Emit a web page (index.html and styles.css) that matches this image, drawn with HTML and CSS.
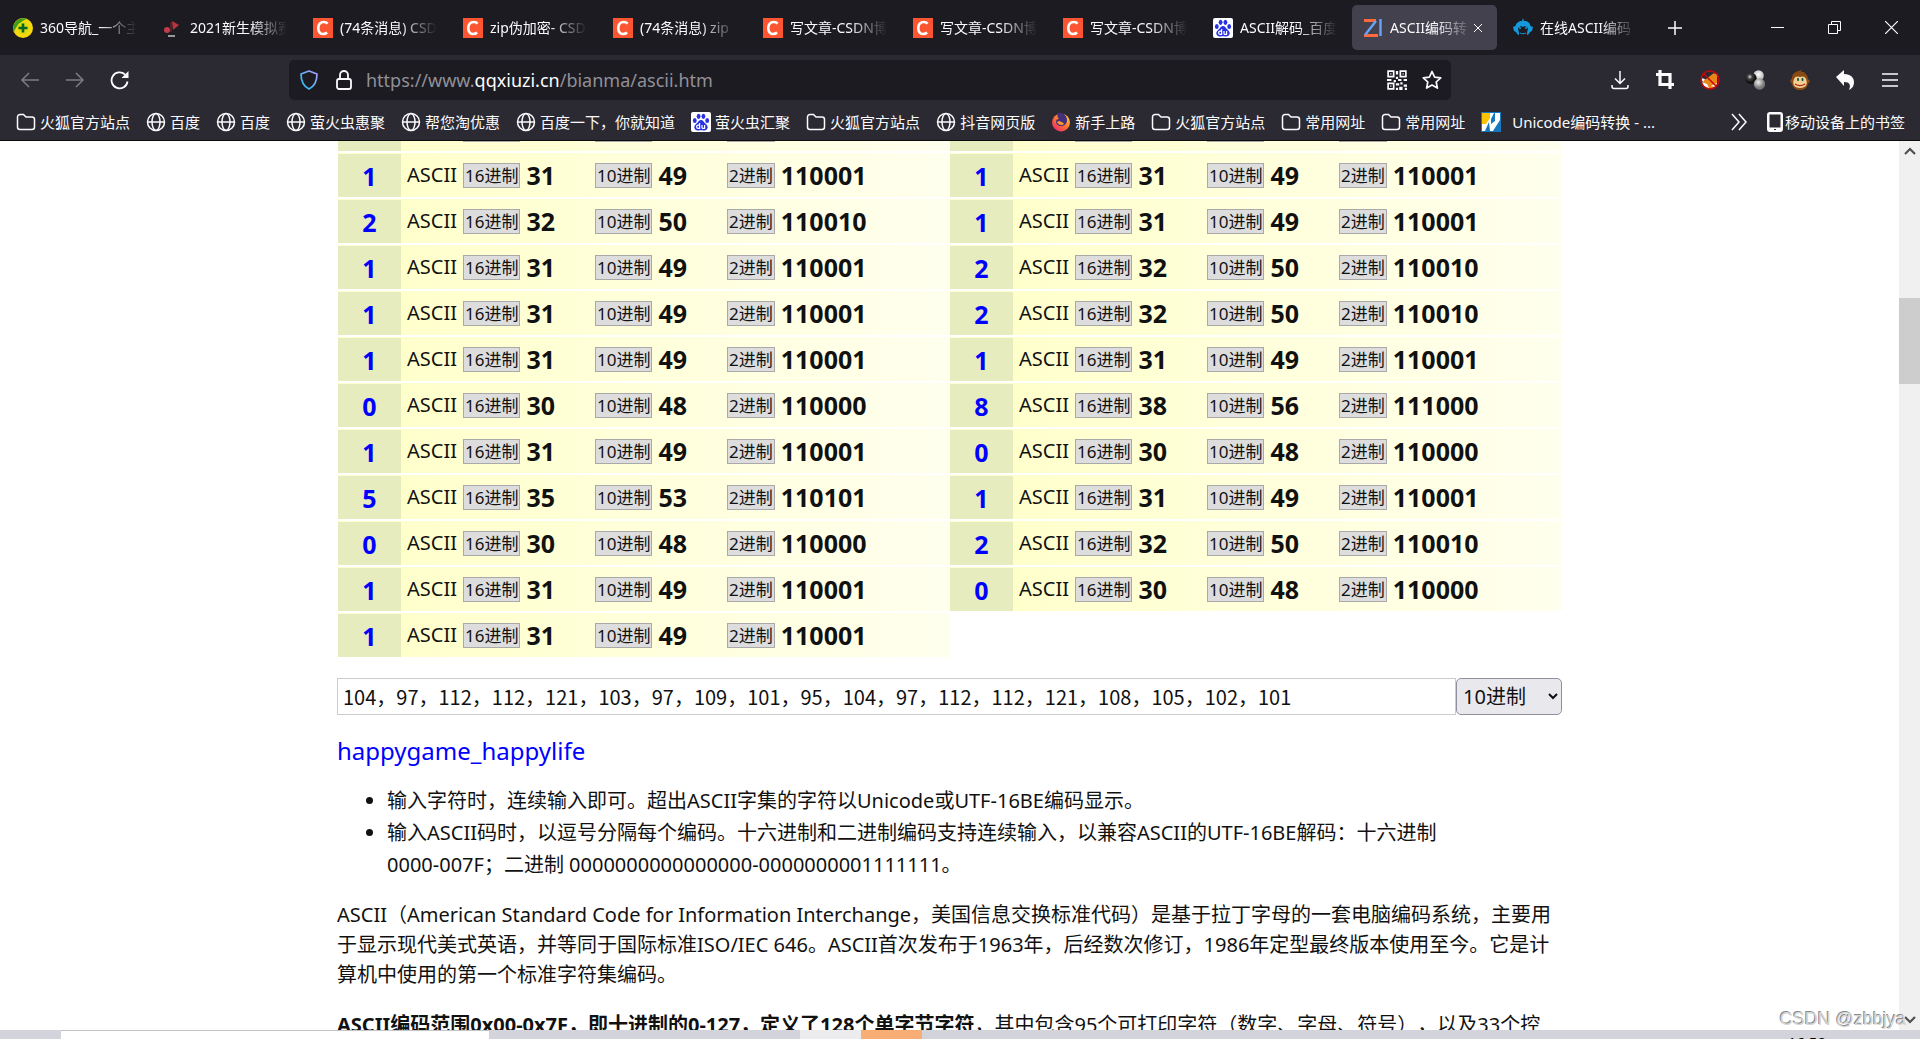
FILE: index.html
```html
<!DOCTYPE html>
<html lang="zh-CN">
<head>
<meta charset="utf-8">
<title>ASCII编码转换</title>
<link rel="stylesheet" href="styles.css">
</head>
<body>
<svg class="defs" aria-hidden="true">
  <symbol id="i-csdn" viewBox="0 0 20 20"><path fill="#fc5531" d="M0 0h20v20H0z"/><path d="M14.6 5.6C13.6 4.5 12.2 4 10.700 4 7.400 4 5.400 6.500 5.300 9.900c-.1 3.500 1.500 6.100 4.700 6.100 1.700 0 3-.5 4.100-1.500" fill="none" stroke="#fff" stroke-width="2.600"/></symbol>
  <symbol id="i-baidu" viewBox="0 0 20 20"><rect width="20" height="20" rx="2" fill="#fff"/><g fill="#2932e1"><ellipse cx="3.800" cy="8.600" rx="1.900" ry="2.500"/><ellipse cx="7.600" cy="4.300" rx="1.900" ry="2.600"/><ellipse cx="12.400" cy="4.300" rx="1.900" ry="2.600"/><ellipse cx="16.200" cy="8.600" rx="1.900" ry="2.500"/><path d="M10 8c2 0 2.600 1.600 3.800 2.900 1.500 1.500 3.100 2.500 2.900 4.600-.3 2.300-2.300 3.200-4.200 2.900-1.700-.3-3.300-.3-5 0-1.900.3-3.900-.6-4.200-2.900-.2-2.100 1.400-3.100 2.900-4.600C7.400 9.600 8 8 10 8z"/></g><path d="M8.600 11v5.400H7.200a1.600 1.600 0 0 1 0-3.200h1.400M11 13v2.400c0 .8.400 1 1 1h1.600V13" fill="none" stroke="#fff" stroke-width="1.200"/></symbol>
  <symbol id="i-folder" viewBox="0 0 20 20"><path d="M1.500 5a2.500 2.500 0 0 1 2.500-2.500h3.500L10 5h6A2.500 2.500 0 0 1 18.500 7.500V15a2.500 2.500 0 0 1-2.500 2.500H4A2.500 2.500 0 0 1 1.500 15z" fill="none" stroke="currentColor" stroke-width="1.500"/></symbol>
  <symbol id="i-globe" viewBox="0 0 20 20"><g fill="none" stroke="currentColor" stroke-width="1.500"><circle cx="10" cy="10" r="8.500"/><ellipse cx="10" cy="10" rx="4" ry="8.500"/><path d="M1.500 10h17"/></g></symbol>
</svg>

<header class="browser">
  <nav class="tabs" aria-label="标签页">
    <a class="tab" href="#"><svg class="icon" viewBox="0 0 20 20"><circle cx="10" cy="10" r="10" fill="#f6d80c"/><path d="M1 14A10 10 0 0 1 14 1c-4 1-11 6-13 13z" fill="#3d9c1b"/><circle cx="10" cy="10" r="6" fill="#d9de12"/><path d="M10 5.500v9M5.500 10h9" stroke="#0b6420" stroke-width="2.600"/></svg><span>360导航_一个主</span></a>
    <a class="tab" href="#"><svg class="icon" viewBox="0 0 20 20"><path d="M9 3l7 4-6 5z" fill="#b8333e"/><circle cx="4" cy="12" r="3" fill="#c33a48"/><path d="M5 18h7" stroke="#999" stroke-width="2"/><path d="M8 4v10" stroke="#7d2630"/></svg><span>2021新生模拟赛</span></a>
    <a class="tab" href="#"><svg class="icon"><use href="#i-csdn"/></svg><span>(74条消息) CSD</span></a>
    <a class="tab" href="#"><svg class="icon"><use href="#i-csdn"/></svg><span>zip伪加密- CSD</span></a>
    <a class="tab" href="#"><svg class="icon"><use href="#i-csdn"/></svg><span>(74条消息) zip</span></a>
    <a class="tab" href="#"><svg class="icon"><use href="#i-csdn"/></svg><span>写文章-CSDN博</span></a>
    <a class="tab" href="#"><svg class="icon"><use href="#i-csdn"/></svg><span>写文章-CSDN博</span></a>
    <a class="tab" href="#"><svg class="icon"><use href="#i-csdn"/></svg><span>写文章-CSDN博</span></a>
    <a class="tab" href="#"><svg class="icon"><use href="#i-baidu"/></svg><span>ASCII解码_百度</span></a>
    <div class="tab selected"><svg class="icon" viewBox="0 0 20 20"><path d="M1 2.500h12M1 17.500h14" stroke="#ff6a3c" stroke-width="3"/><path d="M13 3L2 17M17.500 1v17" stroke="#6aa2f5" stroke-width="2.400"/></svg><span>ASCII编码转</span><button class="close" aria-label="关闭标签页"><svg viewBox="0 0 10 10"><path d="M1 1l8 8M9 1L1 9" stroke="currentColor"/></svg></button></div>
    <a class="tab" href="#"><svg class="icon" viewBox="0 0 20 20"><path d="M10 0l1 3c4 0 6 2 6.500 5l2.500 1-1 4-2 1c-1 2-2 3-3 3v-2l1-5-3-2-2 1-2-1-3 2 1 5v2c-1 0-2-1-3-3l-2-1-1-4 2.500-1C3 5 6 3 9 3z" fill="#1499dc"/><circle cx="7" cy="10" r="1" fill="#1499dc"/><circle cx="13" cy="10" r="1" fill="#1499dc"/><path d="M7 15c2 1 4 1 6 0" stroke="#1499dc" fill="none"/></svg><span>在线ASCII编码</span></a>
    <button class="newtab" aria-label="新标签页"><svg viewBox="0 0 16 16"><path d="M8 1v14M1 8h14" stroke="currentColor" stroke-width="1.500"/></svg></button>
    <div class="window">
      <button aria-label="最小化"><svg viewBox="0 0 13 13"><path d="M0 6.500h13" stroke="currentColor"/></svg></button>
      <button aria-label="还原"><svg viewBox="0 0 13 13"><path d="M.5 3.500h9v9h-9zM3.500 3V.5h9v9H10" fill="none" stroke="currentColor"/></svg></button>
      <button aria-label="关闭"><svg viewBox="0 0 13 13"><path d="M0 0l13 13M13 0L0 13" stroke="currentColor" stroke-width="1.200"/></svg></button>
    </div>
  </nav>

  <div class="toolbar">
    <div class="history">
      <button class="dim" aria-label="后退"><svg viewBox="0 0 20 20"><path d="M19 10H2M9 3l-7 7 7 7" fill="none" stroke="currentColor" stroke-width="1.500"/></svg></button>
      <button class="dim" aria-label="前进"><svg viewBox="0 0 20 20"><path d="M1 10h17M11 3l7 7-7 7" fill="none" stroke="currentColor" stroke-width="1.500"/></svg></button>
      <button aria-label="刷新"><svg viewBox="0 0 20 20"><path d="M17.500 11.500A8 8 0 1 1 15 4.500" fill="none" stroke="currentColor" stroke-width="1.800"/><path d="M18.500 1v7h-7z" fill="currentColor"/></svg></button>
    </div>
    <div class="address">
      <svg class="icon" viewBox="0 0 20 20"><defs><linearGradient id="sh" x1="0" y1="1" x2="1" y2="0"><stop offset="0" stop-color="#18c5f5"/><stop offset="1" stop-color="#b49bff"/></linearGradient></defs><path d="M10 1l8 3c0 7-2 12-8 15C4 16 2 11 2 4z" fill="none" stroke="url(#sh)" stroke-width="1.700" stroke-linejoin="round"/></svg>
      <svg class="icon" viewBox="0 0 20 20"><g fill="none" stroke="currentColor" stroke-width="1.800"><rect x="3" y="9" width="14" height="10" rx="2"/><path d="M6 9V5a4 4 0 0 1 8 0v4"/></g></svg>
      <a class="url" href="#">https://www.<b>qqxiuzi.cn</b>/bianma/ascii.htm</a>
      <svg class="icon" viewBox="0 0 18 18"><g fill="none" stroke="currentColor" stroke-width="1.500"><path d="M1 1h5v5H1zM12 1h5v5h-5zM1 12h5v5H1z"/></g><path d="M3 3h1v1H3zM14 3h1v1h-1zM3 14h1v1H3zM8 1h2v3H8zM8 6h2v2H8zM0 8h4v2H0zM6 9h2v2H6zM10 8h3v2h-3zM15 8h3v2h-3zM8 12h3v2H8zM12 11h2v2h-2zM15 13h3v2h-3zM11 15h3v3h-3zM8 16h2v2H8zM16 16h2v2h-2z" fill="currentColor"/></svg>
      <svg class="icon" viewBox="0 0 20 20"><path d="M10 1.500l2.600 5.600 6.100.7-4.500 4.200 1.200 6.100L10 15l-5.400 3.100L5.800 12 1.300 7.800l6.100-.7z" fill="none" stroke="currentColor" stroke-width="1.700" stroke-linejoin="round"/></svg>
    </div>
    <div class="tools">
      <button aria-label="下载"><svg viewBox="0 0 20 20"><path d="M10 1v12M5 8.500l5 5 5-5M2 15v1.500A2 2 0 0 0 4 18.500h12a2 2 0 0 0 2-2V15" fill="none" stroke="currentColor" stroke-width="1.500"/></svg></button>
      <button aria-label="截图"><svg viewBox="0 0 20 20"><path d="M1 4.500h14V19M5 0v14.500h14" fill="none" stroke="currentColor" stroke-width="3.200"/></svg></button>
      <button aria-label="狐狸扩展"><svg viewBox="0 0 20 20"><path d="M2 10l4-1 8-6 3 3v8l-5 5-6-1z" fill="#e88718"/><path d="M1 8l4 1-2 3zM15 4l2-1 1 4zM2 12l5 2 2 4-5-1zM11 16l6-3-2 4z" fill="#fff"/><circle cx="10" cy="10" r="9" fill="none" stroke="#c5060d" stroke-width="1.500"/><path d="M4 4l12 12" stroke="#c5060d" stroke-width="1.500"/></svg></button>
      <button aria-label="小球扩展"><svg viewBox="0 0 20 20"><defs><radialGradient id="b1" cx=".4" cy=".35"><stop offset="0" stop-color="#ddd"/><stop offset=".4" stop-color="#444"/><stop offset="1" stop-color="#111"/></radialGradient><radialGradient id="b2" cx=".5" cy=".4"><stop offset="0" stop-color="#fff"/><stop offset="1" stop-color="#bbb"/></radialGradient><radialGradient id="b3" cx=".4" cy=".35"><stop offset="0" stop-color="#eee"/><stop offset="1" stop-color="#777"/></radialGradient></defs><circle cx="13.500" cy="5.500" r="5.300" fill="url(#b2)"/><circle cx="6" cy="8.500" r="5.700" fill="url(#b1)"/><circle cx="14.500" cy="14" r="5.700" fill="url(#b3)"/></svg></button>
      <button aria-label="脚本管理器"><svg viewBox="0 0 20 20"><path d="M2 8c0-5 5-7 10-8l-1 2h4l-1 1c3 1 4 4 4 6l2 2-2 3c-1 4-4 6-8 6s-7-2-8-6L0 11z" fill="#8a4a14"/><path d="M4 9c1-3 4-3 6-2 2-1 5-1 6 2 2 5 0 9-6 9s-8-4-6-9z" fill="#f3cf93"/><ellipse cx="8" cy="9.500" rx="1" ry="1.700" fill="#164f4b"/><ellipse cx="12.500" cy="9.500" rx="1" ry="1.700" fill="#164f4b"/><path d="M5 14c3 2 7 2 10 0" fill="none" stroke="#b02418" stroke-width="1.300"/></svg></button>
      <button aria-label="撤销"><svg viewBox="0 0 20 20"><path d="M1 7l8-7v4c7 0 10 4 10 8 0 3-1 6-5 8 2-5 1-8-5-8v4z" fill="currentColor"/></svg></button>
      <button aria-label="菜单"><svg viewBox="0 0 20 20"><path d="M2 4h16M2 10h16M2 16h16" stroke="currentColor" stroke-width="1.400"/></svg></button>
    </div>
  </div>

  <nav class="bookmarks" aria-label="书签">
    <a href="#"><svg class="icon"><use href="#i-folder"/></svg>火狐官方站点</a>
    <a href="#"><svg class="icon"><use href="#i-globe"/></svg>百度</a>
    <a href="#"><svg class="icon"><use href="#i-globe"/></svg>百度</a>
    <a href="#"><svg class="icon"><use href="#i-globe"/></svg>萤火虫惠聚</a>
    <a href="#"><svg class="icon"><use href="#i-globe"/></svg>帮您淘优惠</a>
    <a href="#"><svg class="icon"><use href="#i-globe"/></svg>百度一下，你就知道</a>
    <a href="#"><svg class="icon"><use href="#i-baidu"/></svg>萤火虫汇聚</a>
    <a href="#"><svg class="icon"><use href="#i-folder"/></svg>火狐官方站点</a>
    <a href="#"><svg class="icon"><use href="#i-globe"/></svg>抖音网页版</a>
    <a href="#"><svg class="icon" viewBox="0 0 20 20"><defs><linearGradient id="fx" x1="1" y1="0" x2=".2" y2="1"><stop offset="0" stop-color="#ffe14a"/><stop offset=".5" stop-color="#ff7a2c"/><stop offset="1" stop-color="#f0286e"/></linearGradient></defs><circle cx="10" cy="10.500" r="9" fill="url(#fx)"/><path d="M7 1c5-1 9 3 9 7s-3 6-6 6-5-2-5-4c0-2 1-3 3-3-2-2-2-4-1-6z" fill="#43307c"/><path d="M8 9c2 1 4 1 5 3-2 2-6 1-7-2z" fill="#ff9a2e"/></svg>新手上路</a>
    <a href="#"><svg class="icon"><use href="#i-folder"/></svg>火狐官方站点</a>
    <a href="#"><svg class="icon"><use href="#i-folder"/></svg>常用网址</a>
    <a href="#"><svg class="icon"><use href="#i-folder"/></svg>常用网址</a>
    <a class="wide" href="#"><svg class="icon" viewBox="0 0 20 20"><path fill="#fff" d="M0 0h20v20H0z"/><path d="M0 0h20v20H0z" fill="none" stroke="#1678be" stroke-width="2"/><path d="M1 1h8v5l-4 6H1z" fill="#fcc400"/><path d="M13 1l-3 6v5l4-3V1zM8 10l-4 9h5zM19 8l-7 11h7z" fill="#1678be"/></svg><span>Unicode编码转换 - ...</span></a>
    <button class="more" aria-label="更多书签"><svg viewBox="0 0 18 18"><path d="M2 1l7 8-7 8M9 1l7 8-7 8" fill="none" stroke="currentColor" stroke-width="1.500"/></svg></button>
    <a class="mobile" href="#"><svg viewBox="0 0 16 20"><path d="M3 0h10a3 3 0 0 1 3 3v14a3 3 0 0 1-3 3H3a3 3 0 0 1-3-3V3a3 3 0 0 1 3-3zM2.500 2.500v13h11v-13z" fill="currentColor" fill-rule="evenodd"/><path d="M7 17h2v1H7z" fill="#2b2a33"/></svg>移动设备上的书签</a>
  </nav>
</header>

<div class="viewport">
  <main>
    <div class="content">
      <table class="codes"><tbody id="codes"></tbody></table>
      <form class="decode">
        <input type="text" aria-label="ASCII码" value="104，97，112，112，121，103，97，109，101，95，104，97，112，112，121，108，105，102，101">
        <select aria-label="进制"><option>10进制</option><option>16进制</option><option>2进制</option></select>
      </form>
      <p class="result">happygame_happylife</p>
      <ul>
        <li>输入字符时，连续输入即可。超出ASCII字集的字符以Unicode或UTF-16BE编码显示。</li>
        <li>输入ASCII码时，以逗号分隔每个编码。十六进制和二进制编码支持连续输入，以兼容ASCII的UTF-16BE解码：十六进制<br>0000-007F；二进制 0000000000000000-0000000001111111。</li>
      </ul>
      <p>ASCII（American Standard Code for Information Interchange，美国信息交换标准代码）是基于拉丁字母的一套电脑编码系统，主要用<br>于显示现代美式英语，并等同于国际标准ISO/IEC 646。ASCII首次发布于1963年，后经数次修订，1986年定型最终版本使用至今。它是计<br>算机中使用的第一个标准字符集编码。</p>
      <p><b>ASCII编码范围0x00-0x7F，即十进制的0-127，定义了128个单字节字符</b>，其中包含95个可打印字符（数字、字母、符号），以及33个控</p>
    </div>
  </main>
  <div class="scrollbar">
    <svg viewBox="0 0 12 8"><path d="M1 7l5-5 5 5" fill="none" stroke="#505050" stroke-width="2.200"/></svg>
    <div class="track"><div class="thumb"></div></div>
    <svg viewBox="0 0 12 8"><path d="M1 1l5 5 5-5" fill="none" stroke="#505050" stroke-width="2.200"/></svg>
  </div>
  <span class="watermark">CSDN @zbbjya</span>
</div>

<footer class="taskbar">
  <div class="search"></div><div class="app"></div><div class="app active"></div>
  <span class="clock">16:50</span>
</footer>
<script src="codes.js"></script>
</body>
</html>
```
FILE: styles.css
```css
* { box-sizing: border-box; }
body {
  margin: 0;
  height: 100vh;
  display: flex;
  flex-direction: column;
  overflow: hidden;
  background: #fff;
  color: #111;
  font-family: "Noto Sans", "Noto Sans CJK SC", sans-serif;
  font-size: 20px;
  text-spacing-trim: space-all;
}
.defs { position: absolute; width: 0; height: 0; }
a { color: inherit; text-decoration: none; }
button { border: 0; padding: 0; background: none; color: inherit; display: flex; align-items: center; justify-content: center; }
.icon { width: 20px; height: 20px; flex: none; }

.browser { flex: none; background: #2b2a33; color: #fbfbfe; font-size: 15px; line-height: 20px; border-bottom: 1px solid #0c0c0d; }

.tabs { display: flex; align-items: center; height: 55px; background: #1c1b22; padding-left: 2px; }
.tab { width: 145px; margin-right: 5px; height: 45px; padding: 0 10px 0 11px; display: flex; align-items: center; gap: 7px; border-radius: 5px; font-size: 14px; }
.tab span { flex: 1; min-width: 0; overflow: hidden; white-space: nowrap; mask-image: linear-gradient(to left, transparent, #000 38px); }
.tab.selected { background: #42414d; padding-right: 14px; }
.tab .close { width: 10px; height: 10px; margin-left: -7px; }
.close svg { width: 10px; height: 10px; }
.newtab { width: 45px; height: 45px; }
.newtab svg { width: 16px; height: 16px; }
.window { margin-left: auto; display: flex; }
.window button { width: 57px; height: 45px; }
.window svg { width: 13px; height: 13px; }

.toolbar { display: flex; align-items: center; height: 50px; padding: 0 8px 0 7px; }
.history { display: flex; flex: 0 0 282px; }
.history button, .tools button { width: 45px; height: 40px; }
.history svg, .tools svg { width: 20px; height: 20px; }
.dim { color: #7d7c84; }
.address { flex: 1; height: 40px; display: flex; align-items: center; gap: 15px; padding: 0 9px 0 10px; background: #1c1b22; border-radius: 5px; }
.url { flex: 1; margin-left: -3px; font-size: 18px; line-height: 24px; color: #919097; }
.url b { font-weight: 400; color: #fbfbfe; }
.tools { display: flex; margin-left: 146px; }

.bookmarks { display: flex; align-items: center; height: 35px; padding: 0 15px 2px 16px; gap: 16px; white-space: nowrap; }
.bookmarks a { display: flex; align-items: center; gap: 4px; }
.bookmarks .wide { gap: 11px; }
.bookmarks .mobile { gap: 2px; }
.more { margin-left: auto; margin-right: 3px; width: 18px; height: 20px; }
.more svg { width: 18px; height: 18px; }
.mobile svg { width: 16px; height: 20px; }

.viewport { flex: 1; min-height: 0; display: flex; position: relative; overflow: hidden; }
main { flex: 1; min-width: 0; display: flex; justify-content: center; overflow: hidden; }
.content { width: 1225px; margin: -36px 0 0 0; }

.codes { width: 100%; padding-left: 1px; table-layout: fixed; border-collapse: separate; border-spacing: 0 2px; }
.codes th, .codes td { height: 44px; padding: 0; }
.codes th { width: 63px; font-size: 25px; line-height: 30px; color: #00f; background: #e6ecbe; border-top: 1px solid #ffc; }
.codes th + td { background: linear-gradient(to right, #ffc, #ffe); }
.codes td > div { display: grid; grid-template-columns: 56px 132px 132px 1fr; align-items: center; padding-left: 6px; line-height: 30px; }
.codes td span { display: flex; align-items: center; gap: 6px; }
.codes small { font-size: 17px; line-height: 23px; padding: 0 1px; background: #ddd; border: 1px solid #a9a9a9; }
.codes b { font-size: 25px; }

.decode { display: flex; height: 37px; margin: 19px 0 0; }
.decode input { flex: 1; min-width: 0; border: 1px solid #ccc; padding: 0 5px; background: #fff; color: #111; font-family: "Noto Sans CJK SC", sans-serif; font-size: 20px; }
.decode select { width: 106px; border: 1px solid #8f8f9d; border-radius: 5px; background: #e9e9ed; color: #111; padding: 0 6px 0 2px; font: inherit; }
.result { margin: 16px 0 14px; color: #00f; font-size: 24px; line-height: 40px; }
ul { margin: 0 0 19px; padding-left: 50px; line-height: 32px; }
.content p:not(.result) { margin: 0 0 20px; line-height: 30px; white-space: nowrap; }

.scrollbar { flex: 0 0 21px; display: flex; flex-direction: column; align-items: center; padding: 6px 0; background: #f0f0f0; }
.scrollbar svg { width: 12px; height: 8px; flex: none; }
.track { flex: 1; width: 100%; padding-top: 143px; }
.thumb { height: 86px; background: #cdcdcd; }
.watermark { position: absolute; right: 14px; bottom: -1px; font: 18px/24px "Liberation Sans", sans-serif; color: #d6d6d6; text-shadow: -1px -1px 0 #888; }

.taskbar { flex: none; height: 9px; display: flex; overflow: hidden; background: #d3d4db; padding-left: 61px; }
.search { width: 428px; margin-right: 311px; background: #fff; border-top: 1px solid #c4c4c4; }
.app { width: 61px; background: #ececef; }
.app.active { background: #f7ad74; }
.clock { margin-left: auto; padding-right: 94px; padding-top: 2px; font-size: 15px; line-height: 20px; color: #000; }
```
FILE: codes.js
```js
// Characters of the encoded text, in reading order, two per table row.
const chars = "10112112121108105102101";
const cell = (c) => {
  const n = c.charCodeAt(0);
  const item = (base) => `<span><small>${base}进制</small><b>${n.toString(base)}</b></span>`;
  return `<th scope="row">${c}</th><td><div>ASCII${item(16)}${item(10)}${item(2)}</div></td>`;
};
let rows = "";
for (let k = 0; k < chars.length; k += 2) {
  rows += `<tr>${cell(chars[k])}${chars[k + 1] ? cell(chars[k + 1]) : "<td></td><td></td>"}</tr>`;
}
document.getElementById("codes").innerHTML = rows;
```
